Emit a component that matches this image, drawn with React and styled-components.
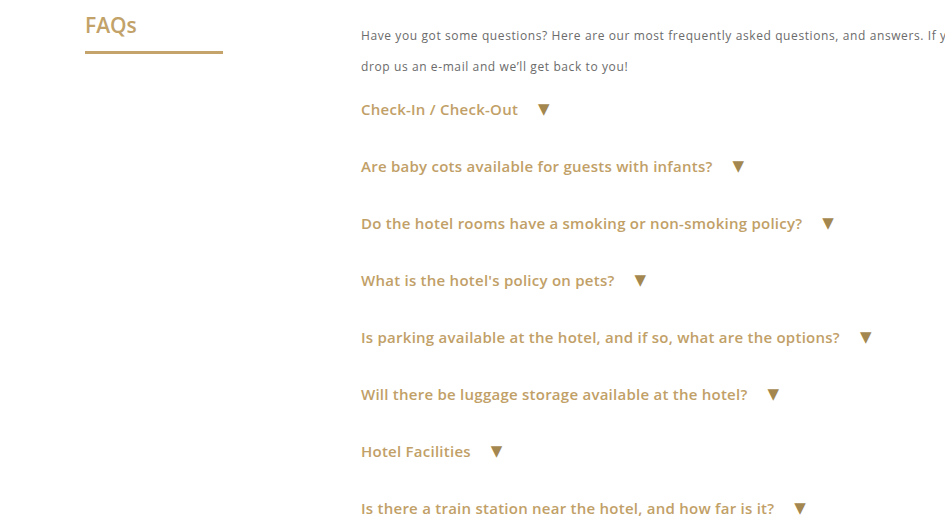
import React from "react";
import styled, { createGlobalStyle } from "styled-components";

const Global = createGlobalStyle`
  html, body { margin: 0; padding: 0; background: #fff; overflow: hidden; }
  body { font-family: "Open Sans", "Liberation Sans", sans-serif; }
`;

const Page = styled.div`
  display: flex;
  width: 945px;
  height: 522px;
  overflow: hidden;
`;

const Side = styled.aside`
  flex: 0 0 361px;
  padding-left: 85px;
  box-sizing: border-box;
`;

const Title = styled.h2`
  margin: 0;
  padding-top: 11px;
  font-size: 21px;
  line-height: 28px;
  font-weight: 600;
  color: #c2a268;
`;

const Rule = styled.div`
  width: 138px;
  height: 3px;
  margin-top: 12px;
  background: #c4a46a;
`;

const Main = styled.main`
  flex: 1;
  min-width: 0;
  padding-top: 20px;
`;

const Intro = styled.p`
  margin: 0;
  font-size: 12px;
  line-height: 31px;
  letter-spacing: 0.6px;
  color: #6b6b6b;
  white-space: nowrap;
`;

const List = styled.ul`
  list-style: none;
  margin: 16px 0 0;
  padding: 0;
  display: flex;
  flex-direction: column;
  gap: 35px;
`;

const Question = styled.li`
  display: flex;
  align-items: center;
  gap: 20px;
  height: 22px;
  font-size: 15px;
  font-weight: 600;
  letter-spacing: 0.25px;
  color: #c1a067;
  white-space: nowrap;
`;

const Caret = styled.span`
  font-family: "DejaVu Sans", sans-serif;
  font-size: 15px;
  color: #a3874f;
`;

const questions = [
  "Check-In / Check-Out",
  "Are baby cots available for guests with infants?",
  "Do the hotel rooms have a smoking or non-smoking policy?",
  "What is the hotel's policy on pets?",
  "Is parking available at the hotel, and if so, what are the options?",
  "Will there be luggage storage available at the hotel?",
  "Hotel Facilities",
  "Is there a train station near the hotel, and how far is it?",
];

export default function App() {
  return (
    <Page>
      <Global />
      <Side>
        <Title>FAQs</Title>
        <Rule />
      </Side>
      <Main>
        <Intro>
          Have you got some questions? Here are our most frequently asked questions, and answers. If you can't find what you need,
          <br />
          drop us an e-mail and we’ll get back to you!
        </Intro>
        <List>
          {questions.map((q) => (
            <Question key={q}>
              {q}
              <Caret>▼</Caret>
            </Question>
          ))}
        </List>
      </Main>
    </Page>
  );
}
